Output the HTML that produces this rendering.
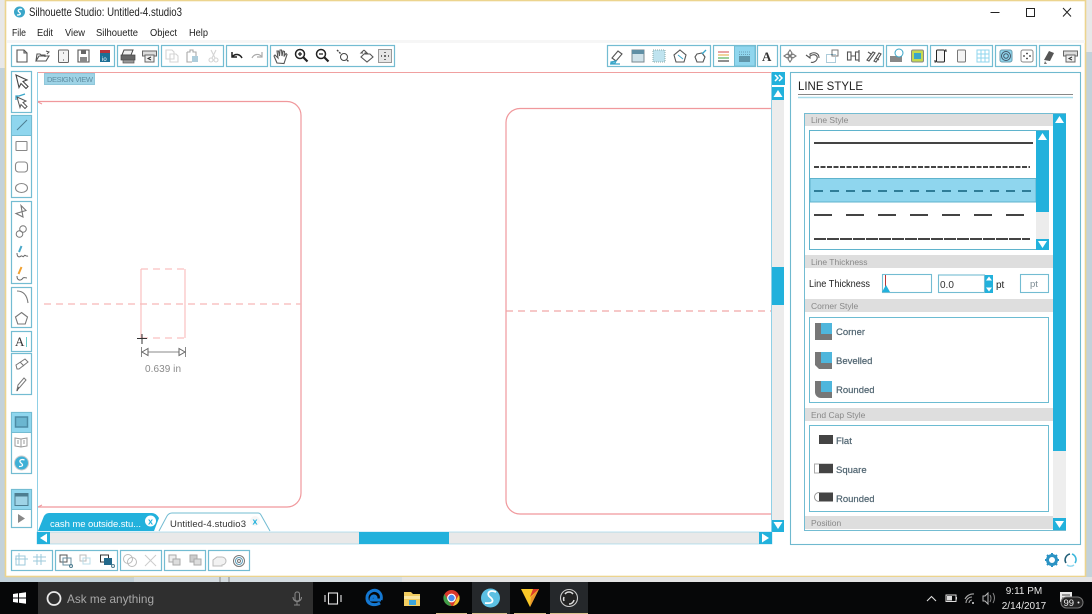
<!DOCTYPE html>
<html lang="en"><head><meta charset="utf-8"><title>Silhouette Studio</title>
<style>
html,body{margin:0;padding:0;background:#fff;width:1092px;height:614px;overflow:hidden}
svg{display:block;position:absolute;left:0;top:0;filter:blur(.3px)}
text{font-family:"Liberation Sans",sans-serif}
.g{fill:#fff;stroke:#73bcd2;stroke-width:1.2}
.i{fill:none;stroke:#555;stroke-width:1.1}
.l{fill:none;stroke:#aaa;stroke-width:1.1}
.h{font-size:8.5px;fill:#888}
.b{font-size:9.500px;fill:#4f6470;stroke:#4f6470;stroke-width:.2}
.hd{fill:#dedede}
.bl{fill:#22b1dc}
</style></head><body>
<svg width="1092" height="614" viewBox="0 0 1092 614" xmlns="http://www.w3.org/2000/svg">
<!-- desktop + window -->
<rect width="1092" height="614" fill="#c3d2da"/>
<rect x="0" y="0" width="6" height="68" fill="#e8e8e8"/>
<rect x="1086" y="0" width="6" height="52" fill="#e8e8e8"/>
<rect x="5.500" y="0.500" width="1080" height="576" fill="#fff" stroke="#ecd48e" stroke-width="1.600"/>
<rect x="7" y="40" width="1078" height="3" fill="#f6f6f6"/>
<!-- title -->
<circle cx="19.500" cy="12" r="5.500" fill="#3aa6c9"/>
<path d="M22 9.500c-3-1-5 1-3 2.500s2 3-2 3" fill="none" stroke="#fff" stroke-width="1.300"/>
<text x="29" y="16" font-size="12" fill="#222" textLength="153" lengthAdjust="spacingAndGlyphs">Silhouette Studio: Untitled-4.studio3</text>
<g font-size="10.500" fill="#222">
<text x="12" y="36" textLength="14" lengthAdjust="spacingAndGlyphs">File</text>
<text x="37" y="36" textLength="16" lengthAdjust="spacingAndGlyphs">Edit</text>
<text x="65" y="36" textLength="20" lengthAdjust="spacingAndGlyphs">View</text>
<text x="96" y="36" textLength="42" lengthAdjust="spacingAndGlyphs">Silhouette</text>
<text x="150" y="36" textLength="27" lengthAdjust="spacingAndGlyphs">Object</text>
<text x="189" y="36" textLength="19" lengthAdjust="spacingAndGlyphs">Help</text>
</g>
<!-- window controls -->
<path d="M990.500 12.500h9" stroke="#222" stroke-width="1"/>
<rect x="1026.500" y="8.500" width="8" height="8" fill="none" stroke="#222" stroke-width="1"/>
<path d="M1063 8l8 8.500M1071 8l-8 8.500" stroke="#222" stroke-width="1"/>

<!-- top toolbar groups -->
<g class="g">
<rect x="11.500" y="45.500" width="103" height="21"/><rect x="117.500" y="45.500" width="41" height="21"/>
<rect x="161.500" y="45.500" width="62" height="21"/><rect x="226.500" y="45.500" width="41" height="21"/>
<rect x="270.500" y="45.500" width="124" height="21"/>
<rect x="607.500" y="45.500" width="103" height="21"/><rect x="713.500" y="45.500" width="42" height="21"/>
<rect x="757.500" y="45.500" width="20" height="21"/><rect x="780.500" y="45.500" width="103" height="21"/>
<rect x="886.500" y="45.500" width="41" height="21"/><rect x="930.500" y="45.500" width="62" height="21"/>
<rect x="995.500" y="45.500" width="41" height="21"/><rect x="1039.500" y="45.500" width="41" height="21"/>
</g>
<rect x="734.500" y="46" width="20.500" height="20" fill="#8fd6ee" stroke="#73bcd2"/>
<!-- left toolbar icons -->
<path class="i" d="M17 50h7l3 3v9H17zM24 50v3h3"/>
<path class="i" d="M36 61l1-7h3l1 1h4v2M36 61h10l3-5H39z"/><path d="M46 51l3 1-2 2" fill="none" stroke="#555"/>
<rect x="58.500" y="50" width="10" height="12.500" rx="1" fill="#f3f3f3" stroke="#666"/><path d="M63 53h1M63 60h1" stroke="#444"/>
<path class="i" d="M78 50h11v12H78z"/><rect x="81" y="50" width="5" height="4" fill="#666"/><rect x="80" y="57" width="7" height="5" fill="#888"/>
<rect x="100" y="50" width="10" height="12" fill="#1c6f96"/><rect x="100" y="50" width="10" height="3" fill="#b4343c"/><text x="102" y="61" font-size="6" fill="#fff">io</text>
<path d="M124 50h9l-2 5h-9z" fill="#eee" stroke="#444"/><rect x="121" y="55" width="14" height="5" fill="#666" stroke="#444" stroke-width=".7"/><rect x="123" y="60" width="11" height="3" fill="#9a9a9a" stroke="#555" stroke-width=".7"/>
<rect x="142.500" y="51" width="14" height="5" fill="#ddd" stroke="#666"/><rect x="145" y="55" width="9" height="7" fill="#eee" stroke="#666"/><path d="M151 57l-3 1.500 3 1.500" fill="none" stroke="#333"/>
<g opacity=".5"><path class="l" d="M166 50h6l2 2v7h-8zM170 54h6l2 2v6h-8z"/>
<path class="i" d="M187 52h3v-2h3v2h3v4M187 52v10h5"/><rect x="192" y="56" width="6" height="6" fill="#5f9db8"/>
<path class="l" d="M211 50l4 8M216 50l-4 8"/><circle cx="211" cy="60" r="2" class="l"/><circle cx="216" cy="60" r="2" class="l"/></g>
<path d="M232 52v5h5M232 57c3-4 8-3 10 1" fill="none" stroke="#222" stroke-width="1.500"/>
<path d="M262 52v5h-5M262 57c-3-4-8-3-10 1" fill="none" stroke="#aaa" stroke-width="1.200"/>
<path class="i" d="M277 63l-3-7 1-1 3 3-1-7 1.500 0 1 5 .5-6h1.500l.5 6 1-5 1.500.5-.5 5 2-3 1 1-2 6-1 3z"/>
<g fill="none" stroke="#222"><circle cx="300" cy="54" r="4.500" stroke-width="1.500"/><path d="M298 54h4M300 52v4" stroke-width="1.300"/><path d="M303.500 57.500l4 4" stroke-width="2.200"/>
<circle cx="321" cy="54" r="4.500" stroke-width="1.500"/><path d="M319 54h4" stroke-width="1.300"/><path d="M324.500 57.500l4 4" stroke-width="2.200"/>
<circle cx="344" cy="57" r="3.500" stroke="#444"/><path d="M347 60l2 2M337 50l4 4" stroke="#444" stroke-width="1.400" stroke-dasharray="2 1"/></g>
<path class="i" d="M364 50l3 3h-2v1h5l3 3-6 5-6-5 3-3h5M364 50l-3 3h2"/>
<rect x="378.500" y="49.500" width="13" height="13" fill="#e6e6e6" stroke="#999"/><path d="M385 52v1M385 59v1M381 56h1M388 56h1" stroke="#444" stroke-width="1.500"/><circle cx="385" cy="56" r="1" fill="#444"/>
<!-- right toolbar icons -->
<path class="i" d="M612 58l6-7 4 3-6 7z"/><path d="M611 62l5-1-1 2h-4zM610 64h10" stroke="#3aa6c9" fill="none" stroke-width="1.300"/>
<rect x="632" y="50" width="12" height="12" fill="#cfe2ea" stroke="#7a8a92"/><rect x="632" y="50" width="12" height="4" fill="#5f8fa5"/>
<rect x="653" y="50" width="12" height="12" fill="#bfe3ef" stroke="#8aa" stroke-dasharray="1 1"/>
<path class="i" d="M680 50l6 5-2 7h-8l-2-7z"/><path d="M678 55l5 4" stroke="#3aa6c9"/>
<path class="i" d="M697 54l5-1 3 4-2 5h-6l-2-5z"/><path d="M702 54l4-4" stroke="#3aa6c9" stroke-width="1.300"/>
<g stroke-width="1.100" fill="none"><path d="M718 52h11" stroke="#d65a5a"/><path d="M718 55h11" stroke="#e3b04b"/><path d="M718 58h11" stroke="#4aa84a"/><path d="M718 61h11" stroke="#333"/>
<path d="M739 52h11M739 54.500h11" stroke="#6a9fb5" stroke-dasharray="1 1"/><path d="M739 57h11M739 59h11M739 61h11" stroke="#2f5566"/></g>
<text x="762" y="61" font-size="13" font-weight="bold" fill="#333" style="font-family:'Liberation Serif',serif">A</text>
<path class="l" d="M790 50l2 3-2 3-2-3zM790 56l2 3-2 3-2-3zM784 56l3-2 3 2-3 2zM790 56l3-2 3 2-3 2z" style="stroke:#777"/>
<path class="i" d="M806 55l4 3v-2c5-3 8 0 7 3s-5 4-6 3"/><path class="i" d="M810 55v-1c3-2 9-2 9 4"/>
<rect x="826.500" y="54.500" width="9" height="8" fill="none" stroke="#5b9ab5" stroke-dasharray="1 1"/><rect x="832" y="50" width="6" height="6" fill="none" stroke="#777"/>
<rect x="847.500" y="52" width="3.500" height="8" class="i"/><rect x="855.500" y="52" width="3.500" height="8" class="i"/><path class="i" d="M851 56h4M859 50v12"/>
<path class="i" d="M867 60l6-8 2 1-6 8zM874 61l5-8 2 1-5 8zM868 52l3 2M876 58l3 2"/>
<path d="M890 56h12v6h-12z" fill="#888"/><circle cx="899" cy="53" r="4" fill="#fff" stroke="#3aa6c9"/>
<rect x="911.500" y="50" width="12" height="12" rx="1.500" fill="#c6d94f" stroke="#888"/><rect x="914" y="53" width="7" height="6" fill="#3aa6c9"/>
<rect x="936.500" y="50" width="8" height="12" rx="1" fill="#f4f4f4" stroke="#222"/><path d="M945 50h1v2M936 62h-1v-2" stroke="#222"/>
<rect x="957.500" y="50" width="8" height="12" rx="1" fill="#f4f4f4" stroke="#777"/>
<path d="M977 50h12v12h-12zM977 54h12M977 58h12M981 50v12M985 50v12" fill="none" stroke="#8fd6ee"/>
<rect x="1000" y="50" width="12" height="12" rx="2" fill="#8fd6ee" stroke="#6b9db0"/><circle cx="1006" cy="56" r="4.500" fill="none" stroke="#456"/><circle cx="1006" cy="56" r="2.300" fill="none" stroke="#456"/>
<rect x="1021" y="50" width="12" height="12" rx="2" fill="#fff" stroke="#888"/><g fill="#333"><circle cx="1024" cy="56" r=".9"/><circle cx="1027" cy="53.500" r=".9"/><circle cx="1030" cy="56" r=".9"/><circle cx="1027" cy="58.500" r=".9"/></g>
<path d="M1044 60l5-9 5 2-4 8z" fill="#555"/><path d="M1045 61l-1 3h3" fill="#777"/>
<rect x="1063.500" y="51" width="14" height="5" fill="#ddd" stroke="#666"/><rect x="1066" y="55" width="9" height="7" fill="#eee" stroke="#666"/><path d="M1072 57l-3 1.500 3 1.500" fill="none" stroke="#333"/>

<!-- canvas -->
<rect x="37.500" y="72.500" width="734" height="460" fill="#fff" stroke="#8fd0e6"/>
<path d="M38 72.500h733" stroke="#f0a0a0"/>
<g fill="none" stroke="#f0989c" stroke-width="1.200">
<path d="M38 101.500H287a14 14 0 0 1 14 14V493a14 14 0 0 1-14 14H38"/>
<path d="M771 108.500H520a14 14 0 0 0-14 14V500a14 14 0 0 0 14 14H771"/>
</g>
<path d="M38 102l4 2M38 507l4-2" stroke="#f0989c"/>
<path d="M44 304H301" stroke="#f6b6b6" stroke-width="1.200" stroke-dasharray="7 5"/>
<path d="M506 311H771" stroke="#f0a6a8" stroke-width="1.200" stroke-dasharray="7 5"/>
<path d="M141 269h44M141 338h44" fill="none" stroke="#f9c0c0" stroke-width="1.200" stroke-dasharray="7 5"/>
<path d="M141 269v69M185 269v69" fill="none" stroke="#f9c0c0" stroke-width="1.200"/>
<path d="M142 334v10M137 338.500h10" stroke="#333" stroke-width="1"/>
<path d="M141.500 347v10M185.500 347v10M147 352h33" stroke="#888"/>
<path d="M142 352l6-3.500v7zM185 352l-6-3.500v7z" fill="#fff" stroke="#666"/>
<text x="145" y="372" font-size="10" fill="#8a8a8a" textLength="36">0.639 in</text>
<rect x="44.500" y="73.500" width="50" height="11" fill="#9ed3e6" stroke="#8fc7da"/>
<text x="47" y="82" font-size="7.500" fill="#5f8ea2" textLength="46">DESIGN VIEW</text>

<!-- left tools -->
<g class="g">
<rect x="11.500" y="71.500" width="20" height="41"/><rect x="11.500" y="115.500" width="20" height="82"/>
<rect x="11.500" y="201.500" width="20" height="82"/><rect x="11.500" y="287.500" width="20" height="40"/>
<rect x="11.500" y="331.500" width="20" height="20"/><rect x="11.500" y="353.500" width="20" height="41"/>
<rect x="11.500" y="412.500" width="20" height="61"/><rect x="11.500" y="489.500" width="20" height="38"/>
</g>
<rect x="11.500" y="115.500" width="20" height="20" fill="#8fd6ee" stroke="#73bcd2"/>
<rect x="11.500" y="412.500" width="20" height="20" fill="#8fd6ee" stroke="#73bcd2"/>
<rect x="11.500" y="489.500" width="20" height="20" fill="#8fd6ee" stroke="#73bcd2"/>
<path d="M16 75l11 5-4 1.500 5 5-2 2-5-5-2 4z" fill="#fff" stroke="#444" stroke-width="1.100"/>
<path d="M17 97l9 4-3 1.500 4 4-2 2-4-4-1 3z" fill="#fff" stroke="#555"/><path d="M16 100v-4h3l6-2" fill="none" stroke="#3aa6c9" stroke-width="1.300"/>
<path d="M17 130l10-10" stroke="#4d7d90"/>
<rect x="16" y="141.500" width="11" height="9" rx=".5" fill="none" stroke="#888" stroke-width="1.100"/>
<rect x="15.500" y="162" width="12" height="10" rx="3" fill="none" stroke="#888" stroke-width="1.100"/>
<ellipse cx="21.500" cy="188" rx="6" ry="4.500" fill="none" stroke="#888" stroke-width="1.100"/>
<path d="M21 205.500l5 5-10 3 7 3.500z" fill="none" stroke="#777" stroke-width="1.100"/>
<circle cx="23" cy="229" r="3.300" fill="none" stroke="#777"/><circle cx="19.500" cy="234" r="3.300" fill="none" stroke="#777"/>
<path d="M19 252l2.500-6" stroke="#4aa8c9" stroke-width="2"/><path d="M17 253c0 5 3 4 4 3s2 2 3 0 2 1 4 0" fill="none" stroke="#666"/>
<path d="M18.500 274l3-7" stroke="#f0a030" stroke-width="2"/><path d="M17 276c0 5 4 5 6 2 1-1 3 0 4 0" fill="none" stroke="#666"/>
<path d="M17 291c6 0 10 4 11 12" fill="none" stroke="#777" stroke-width="1.100"/>
<path d="M21.500 312.500l6 4.500-2.300 7h-7.400l-2.300-7z" fill="none" stroke="#777" stroke-width="1.100"/>
<text x="15" y="346" font-size="13" fill="#333" style="font-family:'Liberation Serif',serif">A</text><path d="M26.500 337v10" stroke="#6cc" stroke-width="1"/>
<path d="M16 365l9-6 3 3-9 7h-2zM20 362l4 4" fill="none" stroke="#777"/>
<path d="M17 390l1-5 6-7 2 2-6 7z" fill="none" stroke="#777"/><path d="M17 391l2-4" stroke="#555"/>
<rect x="15.500" y="417" width="12" height="10" fill="#6bb6d0" stroke="#4d8ca5" stroke-width="1.500"/>
<path d="M15 438l6 1 6-1v8l-6 1-6-1zM21 439v8M17 441h2M17 443h2M23 441h2M23 443h2" fill="none" stroke="#999"/>
<circle cx="21.500" cy="463" r="7" fill="#3fb0d6" stroke="#ccc"/><path d="M24.500 460c-4-1.500-6 1-3.500 3s2 3.500-2 3.500" fill="none" stroke="#fff" stroke-width="1.300"/>
<rect x="15" y="493.500" width="13" height="12" fill="#9ed3e6" stroke="#4d7d90"/><rect x="15" y="493.500" width="13" height="3" fill="#4d7d90"/>
<path d="M18 514l7 4.500-7 4.500z" fill="#888"/>

<!-- canvas right scrollbar -->
<rect x="772" y="72" width="13" height="13" class="bl"/>
<path d="M775 75l3 3-3 3M779 75l3 3-3 3" fill="none" stroke="#fff" stroke-width="1.500"/>
<rect x="772" y="87" width="12" height="445" fill="#ececec"/>
<rect x="772" y="87" width="12" height="13" class="bl"/><path d="M778 90l4.500 7h-9z" fill="#fff"/>
<rect x="772" y="267" width="12" height="38" class="bl"/>
<rect x="772" y="520" width="12" height="12" class="bl"/><path d="M778 529l4.500-7h-9z" fill="#fff"/>

<!-- tabs -->
<path d="M38 531l6-15q2-3 5-3H152q4 0 7 5l-5 13z" class="bl"/>
<text x="50" y="527" font-size="9.500" fill="#fff" textLength="91">cash me outside.stu...</text>
<circle cx="150.500" cy="521" r="5.500" fill="#fff"/><text x="148" y="524.500" font-size="9" font-weight="bold" fill="#22b1dc">x</text>
<path d="M159 531l8-15q2-3 5-3H258q2 0 3 2l9 16" fill="#fff" stroke="#73bcd2"/>
<text x="170" y="527" font-size="9.500" fill="#333" textLength="76">Untitled-4.studio3</text>
<circle cx="255" cy="521" r="5" fill="#f7f7f7"/><text x="252.500" y="524.500" font-size="9" font-weight="bold" fill="#22b1dc">x</text>
<!-- h scroll -->
<rect x="37" y="532" width="735" height="12" fill="#e9e9e9" stroke="#8fd0e6" stroke-width=".6"/>
<rect x="37" y="532" width="13" height="12" class="bl"/><path d="M40 538l7-4.500v9z" fill="#fff"/>
<rect x="359" y="532" width="90" height="12" class="bl"/>
<rect x="759" y="532" width="13" height="12" class="bl"/><path d="M769 538l-7-4.500v9z" fill="#fff"/>

<!-- bottom toolbar -->
<g class="g">
<rect x="11.500" y="550.500" width="41" height="20"/><rect x="55.500" y="550.500" width="62" height="20"/>
<rect x="120.500" y="550.500" width="41" height="20"/><rect x="164.500" y="550.500" width="41" height="20"/>
<rect x="208.500" y="550.500" width="41" height="20"/>
</g>
<g fill="none" stroke="#9ccadb"><rect x="16" y="556" width="9" height="9"/><path d="M19 553v12M15 559h13M37 554v11M41 554v11M33 557h13M33 561h13"/></g>
<rect x="60" y="555" width="7" height="7" fill="none" stroke="#555"/><rect x="63" y="558" width="8" height="7" fill="none" stroke="#6a8fa0"/><circle cx="71" cy="566" r="1.500" fill="none" stroke="#4d7d90"/>
<rect x="80" y="555" width="6" height="6" fill="none" stroke="#bbb"/><rect x="83" y="558" width="7" height="6" fill="none" stroke="#bbdde8"/>
<rect x="100.500" y="555" width="8" height="7" fill="#fff" stroke="#333"/><rect x="104" y="558" width="8" height="7" fill="#22688a"/><circle cx="113" cy="566" r="1.500" fill="none" stroke="#4d7d90"/>
<circle cx="128" cy="559" r="4.500" fill="none" stroke="#bbb"/><circle cx="132" cy="562" r="4.500" fill="none" stroke="#bbb"/>
<path d="M145 555l11 11M156 555l-11 11" stroke="#ccc"/>
<rect x="169" y="555" width="7" height="7" fill="#eee" stroke="#aaa"/><rect x="173" y="559" width="7" height="6" fill="#ddd" stroke="#aaa"/>
<rect x="190" y="555" width="7" height="7" fill="#ccc" stroke="#aaa"/><rect x="194" y="559" width="7" height="6" fill="#ddd" stroke="#aaa"/>
<path d="M213 566v-6l4-3h5a4 4 0 0 1 0 8v1z" fill="#f2f2f2" stroke="#bbb"/>
<circle cx="239" cy="561" r="5.500" fill="none" stroke="#777"/><circle cx="239" cy="561" r="3.500" fill="none" stroke="#5f9db8"/><circle cx="239" cy="561" r="1.500" fill="none" stroke="#777"/>

<!-- right panel -->
<rect x="790.500" y="72.500" width="290" height="472" fill="#fff" stroke="#6fb9cf" stroke-width="1.100"/>
<text x="798" y="90" font-size="12" fill="#222" textLength="65" lengthAdjust="spacingAndGlyphs">LINE STYLE</text>
<path d="M798 94.500h275" stroke="#888"/><path d="M798 97.500h275" stroke="#a8dcea" stroke-width="1.500"/>
<rect x="804.500" y="113.500" width="261" height="417" fill="#fff" stroke="#73bcd2"/>
<rect x="1053" y="114" width="13" height="416" fill="#eee"/>
<rect x="1053" y="114" width="13" height="337" class="bl"/>
<path d="M1059.500 116l4.500 7h-9z" fill="#fff"/>
<rect x="1053" y="518" width="13" height="12" class="bl"/><path d="M1059.500 528l4.500-7h-9z" fill="#fff"/>
<g class="hd"><rect x="805" y="114" width="248" height="12"/><rect x="805" y="255" width="248" height="13"/><rect x="805" y="299" width="248" height="13"/><rect x="805" y="408" width="248" height="13"/><rect x="805" y="516" width="248" height="13"/></g>
<text x="811" y="123" class="h">Line Style</text>
<text x="811" y="265" class="h">Line Thickness</text>
<text x="811" y="309" class="h">Corner Style</text>
<text x="811" y="418" class="h">End Cap Style</text>
<text x="811" y="526" class="h">Position</text>
<!-- line list -->
<rect x="809.500" y="130.500" width="239" height="119" fill="#fff" stroke="#5fb3cc"/>
<rect x="810" y="178.500" width="226" height="23.500" fill="#8fd6ee" stroke="#5fb3cc"/>
<rect x="1036" y="131" width="13" height="119" fill="#ececec"/>
<rect x="1036" y="131" width="13" height="81" class="bl"/><path d="M1042.500 133l4.500 7h-9z" fill="#fff"/>
<rect x="1036" y="239" width="13" height="11" class="bl"/><path d="M1042.500 248l4.500-7h-9z" fill="#fff"/>
<g fill="none" stroke="#444" stroke-width="1.900">
<path d="M814 143h219"/>
<path d="M814 167h216" stroke-dasharray="5 1.500"/>
<path d="M814 191h218" stroke="#2f7d98" stroke-dasharray="9 7"/>
<path d="M814 215h210" stroke-dasharray="18 14"/>
<path d="M814 239h216" stroke-dasharray="12 1"/>
</g>
<!-- thickness -->
<text x="809" y="287" font-size="10" fill="#222" textLength="61" lengthAdjust="spacingAndGlyphs">Line Thickness</text>
<rect x="882.500" y="274.500" width="49" height="18" fill="#fff" stroke="#73bcd2" stroke-width="1.100"/>
<path d="M885.500 275v12" stroke="#b33"/><path d="M886 285l4 7h-8z" class="bl"/>
<rect x="938.500" y="275" width="46" height="17.500" fill="#fff" stroke="#73bcd2" stroke-width="1.100"/>
<text x="940" y="288" font-size="10" fill="#333">0.0</text>
<rect x="985" y="275" width="8" height="18" class="bl"/><path d="M989 276.500l3 4h-6zM989 291.500l3-4h-6z" fill="#fff"/>
<text x="996" y="288" font-size="10" fill="#222">pt</text>
<rect x="1020.500" y="274.500" width="28" height="18" fill="#fff" stroke="#73bcd2" stroke-width="1.100"/>
<text x="1030" y="287" font-size="9.500" fill="#7b8a92">pt</text>
<!-- corner -->
<rect x="809.500" y="317.500" width="239" height="85" fill="#fff" stroke="#6cbcd2"/>
<path d="M815 323h17v17h-17z" fill="#777"/><rect x="821" y="323" width="11" height="11" fill="#4fb6dc"/>
<path d="M815 352h17v17h-13l-4-4z" fill="#777"/><rect x="821" y="352" width="11" height="11" fill="#4fb6dc"/>
<path d="M815 381h17v17h-11a6 6 0 0 1-6-6z" fill="#777"/><rect x="821" y="381" width="11" height="11" fill="#4fb6dc"/>
<text x="836" y="335" class="b">Corner</text><text x="836" y="364" class="b">Bevelled</text><text x="836" y="393" class="b">Rounded</text>
<!-- end cap -->
<rect x="809.500" y="425.500" width="239" height="86" fill="#fff" stroke="#6cbcd2"/>
<rect x="819" y="435" width="14" height="9" fill="#444"/>
<rect x="814.500" y="464" width="18" height="9" fill="#fff" stroke="#aaa"/><rect x="819" y="464" width="14" height="9" fill="#444"/>
<path d="M819 492.500a4.500 4.500 0 0 0 0 9" fill="#fff" stroke="#999"/><rect x="819" y="492.500" width="14" height="9" fill="#444"/>
<text x="836" y="444" class="b">Flat</text><text x="836" y="473" class="b">Square</text><text x="836" y="502" class="b">Rounded</text>
<!-- gear/refresh -->
<circle cx="1052" cy="560" r="4.500" fill="none" stroke="#2b93c4" stroke-width="3"/>
<path d="M1052 553v2.500M1052 564.500v2.500M1045 560h2.500M1056.500 560h2.500M1047 555l2 2M1055 563l2 2M1057 555l-2 2M1049 563l-2 2" stroke="#2b93c4" stroke-width="2"/>
<path d="M1066 563a6 6 0 0 1 4-9" fill="none" stroke="#225f78" stroke-width="1.600"/><path d="M1072 554a6 6 0 0 1 3 9" fill="none" stroke="#3cb7dc" stroke-width="1.600"/><path d="M1074 565a6 6 0 0 1-7 0" fill="none" stroke="#8fd6ee" stroke-width="1.600"/>

<!-- desktop strip details -->
<rect x="134" y="577" width="268" height="5" fill="#d5dde1"/>
<rect x="402" y="577" width="690" height="5" fill="#e4e4e4"/>
<path d="M220 577v5M229 577v5" stroke="#888"/>
<!-- taskbar -->
<rect x="0" y="582" width="1092" height="32" fill="#060708"/>
<rect x="38" y="582" width="275" height="32" fill="#2f2f2f"/>
<rect x="472" y="582" width="38" height="32" fill="#25282b"/>
<rect x="550" y="582" width="38" height="32" fill="#25282b"/>
<g fill="#fff"><path d="M13 594l5-.7v4.200h-5zM19 593.200l7-1v5.300h-7zM13 598.500h5v4.200l-5-.7zM19 598.500h7v5.300l-7-1z"/></g>
<circle cx="54" cy="598.500" r="6.500" fill="none" stroke="#e8e8e8" stroke-width="1.800"/>
<text x="67" y="603" font-size="12" fill="#a8a8a8" textLength="87" lengthAdjust="spacingAndGlyphs">Ask me anything</text>
<rect x="295" y="592" width="4.500" height="9" rx="2" fill="none" stroke="#888"/><path d="M293 597c0 6 8.500 6 8.500 0M297 602v3M294 605h6" fill="none" stroke="#888"/>
<rect x="328.500" y="593" width="9" height="11" fill="none" stroke="#e8e8e8" stroke-width="1.100"/><path d="M325 595v7M341 595v7" stroke="#e8e8e8" stroke-width="1.100"/>
<path d="M381 600h-10c0-5 5-5 5-2h-2.500M380 603c-5 3-13 2-13-5 0-6 7-10 12-6 2 2 3 4 2 8" fill="none" stroke="#1478d2" stroke-width="3"/>
<path d="M404 592h7l2 2h7v12h-16z" fill="#f1cc5f"/><rect x="404" y="596" width="16" height="3" fill="#fbe7a3"/><rect x="409" y="600" width="7" height="5" fill="#3ba5dc"/>
<circle cx="451.500" cy="598" r="8" fill="#d8382d"/><path d="M451.500 606a8 8 0 0 1-7-12l4 7z" fill="#3f9e48"/><path d="M459 595a8 8 0 0 1-6 11l3.500-7z" fill="#f5c431"/><circle cx="451.500" cy="598" r="3.800" fill="#4a8cf0" stroke="#fff" stroke-width="1.200"/>
<circle cx="490.500" cy="598" r="9.500" fill="#5cc0e3"/><path d="M496 592c-7-3-10 2-6 5s4 7-5 6" fill="none" stroke="#fff" stroke-width="1.800"/>
<path d="M521 589h18l-9 18z" fill="#f9c828"/><path d="M530 607l1-10 8-8z" fill="#e9962c"/><path d="M530 597l9-8h-6z" fill="#d93a2c"/>
<circle cx="569" cy="598" r="8.500" fill="#222" stroke="#ccc" stroke-width="1.100"/><path d="M565 594a5 5 0 0 1 8 0M574 600a5 5 0 0 1-5 4M564 601a5 5 0 0 1 0-4" fill="none" stroke="#ddd" stroke-width="1.500"/>
<path d="M436 613.500h31M472 613.500h35M514 613.500h32M550 613.500h38" stroke="#d9c08e" stroke-width="1"/>
<!-- tray -->
<path d="M927 601l4.500-4.500 4.500 4.500" fill="none" stroke="#ddd" stroke-width="1.100"/>
<rect x="946" y="595" width="10" height="6.500" fill="none" stroke="#ddd"/><rect x="947" y="596" width="5" height="4.500" fill="#ddd"/><rect x="956" y="597" width="1" height="2.500" fill="#ddd"/>
<path d="M966 603a6 6 0 0 1 6-6M969 603a3 3 0 0 1 3-3M965 599a9 9 0 0 1 9-5" fill="none" stroke="#aaa" stroke-width="1.100"/><circle cx="973" cy="603" r="1" fill="#ddd"/>
<path d="M983 596h2l3-3v11l-3-3h-2z" fill="none" stroke="#bbb"/><path d="M990 595q2 3 0 7M993 593q3 5 0 10" fill="none" stroke="#888"/>
<g fill="#e8e8e8" font-size="10" text-anchor="middle"><text x="1024" y="594">9:11 PM</text><text x="1024" y="609">2/14/2017</text></g>
<path d="M1060 592h12v10h-12z" fill="#e8e8e8"/><path d="M1062 595h8M1062 598h8" stroke="#444"/>
<rect x="1061" y="597" width="22" height="11" rx="5.500" fill="#222" stroke="#777"/>
<text x="1063.500" y="606" font-size="9.500" fill="#eee">99</text><circle cx="1078.500" cy="602.500" r="1" fill="#eee"/>
</svg>
</body></html>
